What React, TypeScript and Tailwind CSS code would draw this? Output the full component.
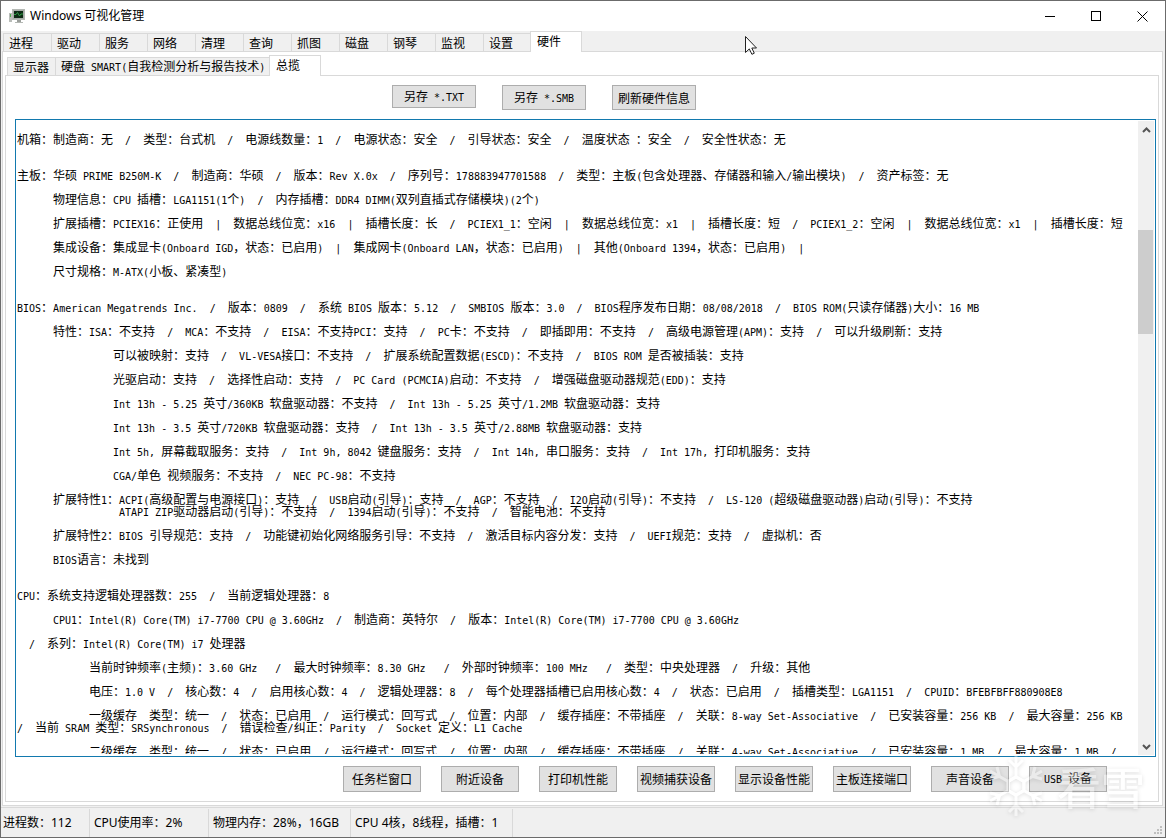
import React from "react";

const MAIN_TABS = ["进程", "驱动", "服务", "网络", "清理", "查询", "抓图", "磁盘", "钢琴", "监视", "设置", "硬件"];
const SUB_TABS = ["显示器", "硬盘 SMART(自我检测分析与报告技术)", "总揽"];
const DEVICE_BUTTONS = ["任务栏窗口", "附近设备", "打印机性能", "视频捕获设备", "显示设备性能", "主板连接端口", "声音设备", "USB 设备"];
const STATUS = [
  { text: "进程数：112", width: "w-[89px] pl-0.5" },
  { text: "CPU使用率：2%", width: "w-[119px] pl-1" },
  { text: "物理内存：28%，16GB", width: "w-[142px] pl-1" },
  { text: "CPU 4核，8线程，插槽：1", width: "w-[162px] pl-1" },
];

const INDENT = {
  none: "pl-0",
  small: "pl-3",
  item: "pl-9",
  detail: "pl-18",
  deep: "pl-24",
  wrap: "pl-[102px]",
};

type Line = { text: string; indent?: keyof typeof INDENT; tight?: boolean };

const SECTIONS: Line[][] = [
  [
    { text: "机箱：制造商：无  /  类型：台式机  /  电源线数量：1  /  电源状态：安全  /  引导状态：安全  /  温度状态 ：安全  /  安全性状态：无" },
  ],
  [
    { text: "主板：华硕 PRIME B250M-K  /  制造商：华硕  /  版本：Rev X.0x  /  序列号：178883947701588  /  类型：主板(包含处理器、存储器和输入/输出模块)  /  资产标签：无" },
    { indent: "item", text: "物理信息：CPU 插槽：LGA1151(1个)  /  内存插槽：DDR4 DIMM(双列直插式存储模块)(2个)" },
    { indent: "item", text: "扩展插槽：PCIEX16：正使用  |  数据总线位宽：x16  |  插槽长度：长  /  PCIEX1_1：空闲  |  数据总线位宽：x1  |  插槽长度：短  /  PCIEX1_2：空闲  |  数据总线位宽：x1  |  插槽长度：短" },
    { indent: "item", text: "集成设备：集成显卡(Onboard IGD，状态：已启用)  |  集成网卡(Onboard LAN，状态：已启用)  |  其他(Onboard 1394，状态：已启用)  |" },
    { indent: "item", text: "尺寸规格：M-ATX(小板、紧凑型)" },
  ],
  [
    { text: "BIOS：American Megatrends Inc.  /  版本：0809  /  系统 BIOS 版本：5.12  /  SMBIOS 版本：3.0  /  BIOS程序发布日期：08/08/2018  /  BIOS ROM(只读存储器)大小：16 MB" },
    { indent: "item", text: "特性：ISA：不支持  /  MCA：不支持  /  EISA：不支持PCI：支持  /  PC卡：不支持  /  即插即用：不支持  /  高级电源管理(APM)：支持  /  可以升级刷新：支持" },
    { indent: "deep", text: "可以被映射：支持  /  VL-VESA接口：不支持  /  扩展系统配置数据(ESCD)：不支持  /  BIOS ROM 是否被插装：支持" },
    { indent: "deep", text: "光驱启动：支持  /  选择性启动：支持  /  PC Card (PCMCIA)启动：不支持  /  增强磁盘驱动器规范(EDD)：支持" },
    { indent: "deep", text: "Int 13h - 5.25 英寸/360KB 软盘驱动器：不支持  /  Int 13h - 5.25 英寸/1.2MB 软盘驱动器：支持" },
    { indent: "deep", text: "Int 13h - 3.5 英寸/720KB 软盘驱动器：支持  /  Int 13h - 3.5 英寸/2.88MB 软盘驱动器：支持" },
    { indent: "deep", text: "Int 5h, 屏幕截取服务：支持  /  Int 9h, 8042 键盘服务：支持  /  Int 14h, 串口服务：支持  /  Int 17h, 打印机服务：支持" },
    { indent: "deep", text: "CGA/单色 视频服务：不支持  /  NEC PC-98：不支持" },
    { indent: "item", text: "扩展特性1：ACPI(高级配置与电源接口)：支持  /  USB启动(引导)：支持  /  AGP：不支持  /  I2O启动(引导)：不支持  /  LS-120 (超级磁盘驱动器)启动(引导)：不支持" },
    { indent: "wrap", tight: true, text: "ATAPI ZIP驱动器启动(引导)：不支持  /  1394启动(引导)：不支持  /  智能电池：不支持" },
    { indent: "item", text: "扩展特性2：BIOS 引导规范：支持  /  功能键初始化网络服务引导：不支持  /  激活目标内容分发：支持  /  UEFI规范：支持  /  虚拟机：否" },
    { indent: "item", text: "BIOS语言：未找到" },
  ],
  [
    { text: "CPU：系统支持逻辑处理器数：255  /  当前逻辑处理器：8" },
    { indent: "item", text: "CPU1：Intel(R) Core(TM) i7-7700 CPU @ 3.60GHz  /  制造商：英特尔  /  版本：Intel(R) Core(TM) i7-7700 CPU @ 3.60GHz" },
    { indent: "small", text: "/  系列：Intel(R) Core(TM) i7 处理器" },
    { indent: "detail", text: "当前时钟频率(主频)：3.60 GHz   /  最大时钟频率：8.30 GHz   /  外部时钟频率：100 MHz   /  类型：中央处理器  /  升级：其他" },
    { indent: "detail", text: "电压：1.0 V  /  核心数：4  /  启用核心数：4  /  逻辑处理器：8  /  每个处理器插槽已启用核心数：4  /  状态：已启用  /  插槽类型：LGA1151  /  CPUID：BFEBFBFF880908E8" },
    { indent: "detail", text: "一级缓存  类型：统一  /  状态：已启用  /  运行模式：回写式  /  位置：内部  /  缓存插座：不带插座  /  关联：8-way Set-Associative  /  已安装容量：256 KB  /  最大容量：256 KB" },
    { tight: true, text: "/  当前 SRAM 类型：SRSynchronous  /  错误检查/纠正：Parity  /  Socket 定义：L1 Cache" },
    { indent: "detail", text: "二级缓存  类型：统一  /  状态：已启用  /  运行模式：回写式  /  位置：内部  /  缓存插座：不带插座  /  关联：4-way Set-Associative  /  已安装容量：1 MB  /  最大容量：1 MB  /" },
  ],
];

/* Latin runs are set half as wide as an ideograph, so columns stay on a 6px grid. */
function Mixed({ text }: { text: string }) {
  return (
    <>
      {text.split(/([\x20-\x7e]+)/).map((run, i) =>
        i % 2 ? (
          <span key={i} className="font-['DejaVu_Sans_Mono',monospace] text-[10px]">{run}</span>
        ) : (
          run
        ),
      )}
    </>
  );
}

function PushButton({ label, className }: { label: string; className: string }) {
  return (
    <button type="button" className={`flex shrink-0 items-center justify-center border border-[#adadad] bg-[#e1e1e1] whitespace-pre ${className}`}>
      <span><Mixed text={label} /></span>
    </button>
  );
}

function AppIcon() {
  return (
    <svg width="17" height="15" viewBox="0 0 17 15" className="shrink-0" aria-hidden="true">
      <rect x="0" y="4" width="3" height="9" fill="#b9bdb9" />
      <rect x="1" y="5" width="1" height="3" fill="#4fae4f" />
      <rect x="3.5" y="0.5" width="12" height="10" fill="#a7aba7" stroke="#b4b8b4" />
      <rect x="5" y="2" width="9" height="7" fill="#0c2a14" />
      <path d="M5 5.500h2l1.500-2 2 3.500 1.500-2h2" fill="none" stroke="#2f9a45" />
      <rect x="8" y="11" width="4" height="2" fill="#9a9e9a" />
      <rect x="6" y="13" width="8" height="1" fill="#b4b8b4" />
    </svg>
  );
}

function TitleBar() {
  const control = "flex h-[30px] w-[46px] items-center justify-center";
  return (
    <header className="flex h-[30px] shrink-0 items-center bg-white pl-2">
      <AppIcon />
      <h1 className="ml-1 flex-1 font-['Noto_Sans','Noto_Sans_CJK_SC',sans-serif] text-[12px]">Windows 可视化管理</h1>
      <button type="button" aria-label="最小化" className={control}>
        <svg width="11" height="11" viewBox="0 0 11 11" shapeRendering="crispEdges"><path d="M0 5.500h10" stroke="#000" /></svg>
      </button>
      <button type="button" aria-label="最大化" className={control}>
        <svg width="11" height="11" viewBox="0 0 11 11" shapeRendering="crispEdges"><rect x="0.500" y="0.500" width="9" height="9" fill="none" stroke="#000" /></svg>
      </button>
      <button type="button" aria-label="关闭" className={control}>
        <svg width="11" height="11" viewBox="0 0 11 11"><path d="M0.500 0.500l10 10M10.500 0.500l-10 10" stroke="#000" /></svg>
      </button>
    </header>
  );
}

function Tabs({ labels, active, width, activeWidth }: { labels: string[]; active: number; width: string; activeWidth: string }) {
  return (
    <div role="tablist" className="relative z-10 -mb-px flex items-end">
      {labels.map((label, i) =>
        i === active ? (
          <button key={label} role="tab" aria-selected="true" type="button" className={`-ml-px h-[21px] shrink-0 border border-b-0 border-[#d9d9d9] bg-white pb-0.5 pl-1.5 text-left whitespace-pre ${activeWidth}`}>
            <Mixed text={label} />
          </button>
        ) : (
          <button key={label} role="tab" aria-selected="false" type="button" className={`h-[19px] shrink-0 border border-r-0 border-[#d9d9d9] bg-[#f0f0f0] pl-[5px] text-left whitespace-pre ${width}`}>
            <Mixed text={label} />
          </button>
        ),
      )}
    </div>
  );
}

function ScrollBar() {
  return (
    <div className="flex w-4 shrink-0 flex-col items-center bg-[#f0f0f0]">
      <button type="button" aria-label="向上滚动" className="flex h-[17px] w-full shrink-0 items-center justify-center">
        <svg width="9" height="6" viewBox="0 0 9 6"><path d="M1 5l3.500-3.500L8 5" fill="none" stroke="#555" strokeWidth="2" /></svg>
      </button>
      <div className="flex w-full flex-1 flex-col">
        <div className="h-[92px] shrink-0" />
        <div className="h-[104px] w-[15px] shrink-0 bg-[#cdcdcd]" />
      </div>
      <button type="button" aria-label="向下滚动" className="flex h-[17px] w-full shrink-0 items-center justify-center">
        <svg width="9" height="6" viewBox="0 0 9 6"><path d="M1 1l3.500 3.500L8 1" fill="none" stroke="#555" strokeWidth="2" /></svg>
      </button>
    </div>
  );
}

function Report() {
  return (
    <section aria-label="硬件信息" className="mr-0.5 ml-[9px] flex min-h-0 flex-1 border border-[#1279ae] bg-white">
      <div className="mb-0.5 min-w-0 flex-1 overflow-hidden pt-[7px] pl-px">
        {SECTIONS.map((lines, s) => (
          <div key={s} className="mb-3">
            {lines.map(({ text, indent = "none", tight }, i) => (
              <p key={i} className={`h-6 leading-6 whitespace-pre ${INDENT[indent]} ${tight ? "-mt-3" : ""}`}>
                <Mixed text={text} />
              </p>
            ))}
          </div>
        ))}
      </div>
      <div className="flex py-px pr-px">
        <ScrollBar />
      </div>
    </section>
  );
}

function Watermark() {
  return (
    <div className="pointer-events-none absolute right-5 bottom-5 z-20 flex items-center gap-3 text-white opacity-35 drop-shadow-[0_1px_2px_rgba(0,0,0,0.35)]">
      <svg width="58" height="62" viewBox="-29 -31 58 62" fill="none" stroke="currentColor" strokeWidth="3" aria-hidden="true">
        {[0, 60, 120, 180, 240, 300].map((angle) => (
          <path key={angle} transform={`rotate(${angle})`} d="M0-9v-21M-7-26l7 7 7-7M-8-4.600V-4.600L0-9l8 4.400" />
        ))}
      </svg>
      <span className="font-['Noto_Sans_CJK_SC',sans-serif] text-[44px] leading-none font-medium">看雪</span>
    </div>
  );
}

function Pointer() {
  return (
    <svg width="13" height="20" viewBox="0 0 13 20" className="pointer-events-none absolute top-[35px] left-[744px] z-20" aria-hidden="true">
      <path d="M0.500 0.500v16l3.800-3.600 2.600 5.400 2.400-1.100-2.500-5.200H11.500z" fill="#fff" stroke="#222" />
    </svg>
  );
}

function SizeGrip() {
  return (
    <svg width="9" height="9" viewBox="0 0 9 9" className="mr-0.5 mb-0.5 self-end" fill="#bfbfbf" aria-hidden="true">
      <path d="M6 0h2v2h-2zM3 3h2v2h-2zM6 3h2v2h-2zM0 6h2v2h-2zM3 6h2v2h-2zM6 6h2v2h-2z" />
    </svg>
  );
}

export default function App() {
  return (
    <div lang="zh-CN" className="relative flex h-screen flex-col overflow-hidden border border-[#6b6b6b] bg-[#f0f0f0] font-['Noto_Sans_CJK_SC',sans-serif] text-[12px] leading-4 text-black [text-spacing-trim:space-all]">
      <TitleBar />
      <main className="flex min-h-0 flex-1 flex-col pr-0.5 pl-px">
        <div className="pl-px">
          <Tabs labels={MAIN_TABS} active={11} width="w-12" activeWidth="w-[52px]" />
        </div>
        <div className="flex min-h-0 flex-1 flex-col border border-[#d9d9d9] bg-white pt-[3px] pr-[3px] pb-[3px] pl-0.5">
          <div className="pl-0.5">
            <Tabs labels={SUB_TABS} active={2} width="first:w-12 w-[215px]" activeWidth="w-[52px]" />
          </div>
          <div className="flex min-h-0 flex-1 flex-col border border-[#d9d9d9] bg-white">
            <div className="flex h-[43px] shrink-0 items-start gap-[26px] pt-[9px] pl-[386px]">
              <PushButton label="另存 *.TXT" className="h-[23px] w-[84px]" />
              <PushButton label="另存 *.SMB" className="h-[25px] w-[84px]" />
              <PushButton label="刷新硬件信息" className="h-[25px] w-[84px]" />
            </div>
            <Report />
            <div className="flex h-[44px] shrink-0 justify-end gap-5 pt-[9px] pr-[51px]">
              {DEVICE_BUTTONS.map((label) => (
                <PushButton key={label} label={label} className="h-[26px] w-[78px]" />
              ))}
            </div>
          </div>
        </div>
      </main>
      <footer className="mt-px flex h-[30px] shrink-0 border-t border-[#d9d9d9] pt-px font-['Noto_Sans','Noto_Sans_CJK_SC',sans-serif]">
        {STATUS.map(({ text, width }) => (
          <div key={text} className={`flex shrink-0 items-center border-r border-[#d9d9d9] whitespace-pre ${width}`}>{text}</div>
        ))}
        <div className="flex-1" />
        <SizeGrip />
      </footer>
      <Watermark />
      <Pointer />
    </div>
  );
}
